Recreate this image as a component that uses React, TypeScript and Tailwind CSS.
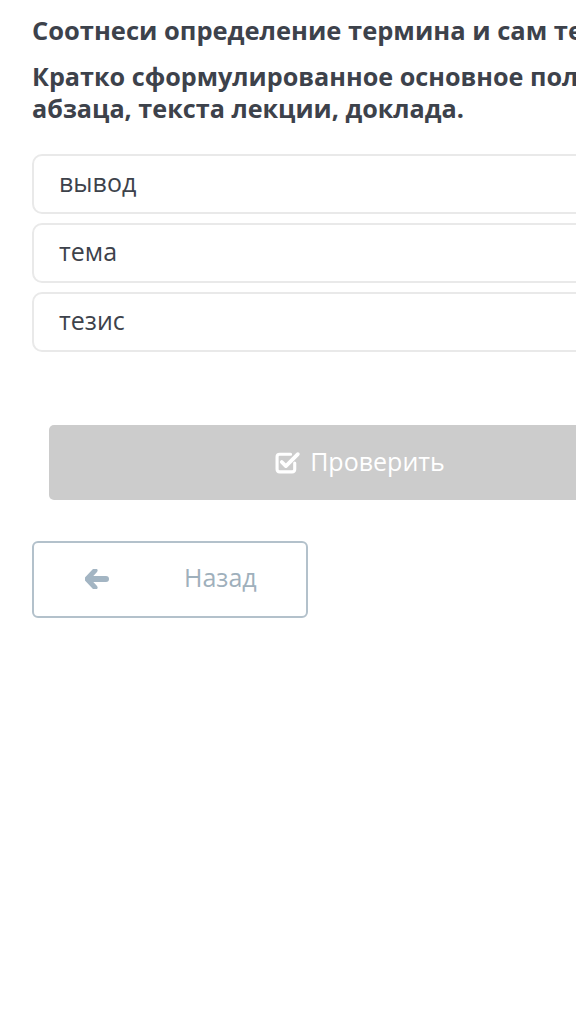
import React from "react";

function CheckSquareIcon() {
  return (
    <svg width="27" height="25" viewBox="0 0 26 24" fill="none">
      <path
        d="M19 12.5V18.5C19 20 18 21 16.5 21H4.5C3 21 2 20 2 18.5V6.5C2 5 3 4 4.5 4H15"
        stroke="white"
        strokeWidth="3"
        strokeLinecap="round"
      />
      <path
        d="M6.5 11.5L10.5 15.5L22 4"
        stroke="white"
        strokeWidth="3.6"
        strokeLinecap="round"
        strokeLinejoin="round"
      />
    </svg>
  );
}

function ArrowLeftIcon() {
  return (
    <svg width="24" height="20" viewBox="0 0 24 20">
      <path
        d="M10 1.5L2 10L10 18.5"
        stroke="#a3b5c3"
        strokeWidth="5"
        strokeLinecap="round"
        strokeLinejoin="round"
        fill="none"
      />
      <path d="M4 10H21" stroke="#a3b5c3" strokeWidth="6" strokeLinecap="round" />
    </svg>
  );
}

export default function App() {
  const items = ["вывод", "тема", "тезис"];
  return (
    <div
      className="w-full min-h-screen overflow-hidden bg-white"
      style={{ fontFamily: '"Open Sans", "Noto Sans", sans-serif' }}
    >
      <div className="w-[720px] px-8 pt-[14px]">
        <h1 className="text-[25.5px] font-bold leading-[32px] text-[#3d424b] whitespace-nowrap">
          Соотнеси определение термина и сам термин.
        </h1>
        <p className="mt-[14px] text-[25.2px] font-bold leading-[32px] text-[#3d424b]">
          Кратко сформулированное основное положение абзаца, текста лекции, доклада.
        </p>
        <div className="mt-[30px] flex flex-col gap-[9px]">
          {items.map((t) => (
            <div
              key={t}
              className="h-[60px] border-2 border-[#e9e9e9] rounded-[10px] px-[25px] flex items-center text-[25px] text-[#3d424b]"
            >
              <span className="pb-[2px]">{t}</span>
            </div>
          ))}
        </div>
        <div className="mt-[73px] mx-[17px] h-[75px] bg-[#cccccc] rounded-[5px] flex items-center justify-center gap-[8px] text-white text-[25px]">
          <CheckSquareIcon />
          <span className="pb-[2px]">Проверить</span>
        </div>
        <div className="mt-[41px] w-[276px] h-[77px] border-2 border-[#b3c1cb] rounded-[6px] flex items-center">
          <div className="w-[150px] pl-[51px] flex items-center pb-[2px]">
            <ArrowLeftIcon />
          </div>
          <span className="text-[25px] text-[#9fb0bc] pb-[4px]">Назад</span>
        </div>
      </div>
    </div>
  );
}
